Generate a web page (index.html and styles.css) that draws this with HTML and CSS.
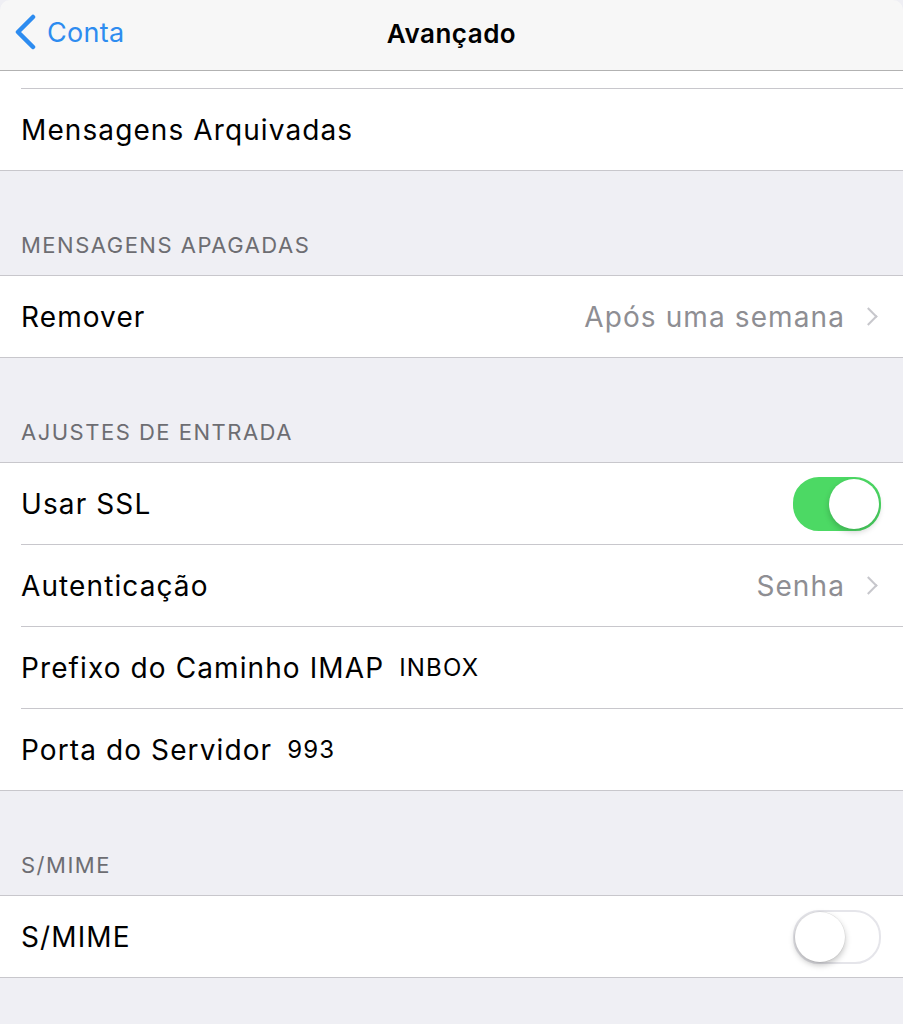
FILE: index.html
```html
<!DOCTYPE html>
<html lang="pt">
<head>
    <meta charset="UTF-8">
    <title>Avançado</title>
    <link rel="stylesheet" href="styles.css">
</head>
<body>
    <header class="navbar">
        <a class="back">
            <svg class="back-icon" width="22" height="36" viewBox="0 0 22 36"><path d="M19 3 L4 18 L19 33" fill="none" stroke="#2d8cf0" stroke-width="4.5" stroke-linecap="round" stroke-linejoin="round"/></svg>
            <span>Conta</span>
        </a>
        <div class="title">Avançado</div>
    </header>

    <div class="group">
        <div class="cut-row"></div>
        <div class="row"><span class="label">Mensagens Arquivadas</span></div>
    </div>

    <div class="section-title">MENSAGENS APAGADAS</div>
    <div class="group">
        <div class="row">
            <span class="label">Remover</span>
            <span class="value">Após uma semana</span>
            <span class="chevron"></span>
        </div>
    </div>

    <div class="section-title">AJUSTES DE ENTRADA</div>
    <div class="group">
        <div class="row">
            <span class="label">Usar SSL</span>
            <span class="switch on"><span class="knob"></span></span>
        </div>
        <div class="row">
            <span class="label">Autenticação</span>
            <span class="value">Senha</span>
            <span class="chevron"></span>
        </div>
        <div class="row">
            <span class="label">Prefixo do Caminho IMAP</span>
            <span class="inline-value">INBOX</span>
        </div>
        <div class="row">
            <span class="label">Porta do Servidor</span>
            <span class="inline-value">993</span>
        </div>
    </div>

    <div class="section-title">S/MIME</div>
    <div class="group">
        <div class="row">
            <span class="label">S/MIME</span>
            <span class="switch"><span class="knob"></span></span>
        </div>
    </div>
</body>
</html>
```

FILE: styles.css
```css
body {
    margin: 0;
    background-color: #efeff4;
    font-family: Inter, "Noto Sans", sans-serif;
    color: #000;
    height: 1024px;
    overflow: hidden;
}
.navbar {
    position: relative;
    height: 70px;
    background-color: #f7f7f7;
    border-bottom: 1px solid #b2b2b2;
    border-radius: 10px 10px 0 0;
    display: flex;
    align-items: center;
    justify-content: center;
}
.back {
    position: absolute;
    left: 14px;
    top: 14px;
    display: flex;
    align-items: center;
    color: #2d8cf0;
    font-size: 27px;
    letter-spacing: 0.3px;
}
.back-icon {
    margin-right: 11px;
}
.title {
    font-size: 26px;
    font-weight: 600;
    letter-spacing: 0.5px;
    margin-top: -3px;
}
.group {
    background-color: #fff;
    border-bottom: 1px solid #c8c7cc;
    border-top: 1px solid #c8c7cc;
    padding-left: 21px;
}
.navbar + .group {
    border-top: none;
}
.cut-row {
    height: 17px;
    border-bottom: 1px solid #c8c7cc;
}
.row {
    height: 81px;
    display: flex;
    align-items: center;
    padding-right: 22px;
    border-bottom: 1px solid #c8c7cc;
    font-size: 28px;
    letter-spacing: 1.1px;
}
.row:last-child {
    border-bottom: none;
}
.label {
    flex: none;
}
.value {
    margin-left: auto;
    color: #8e8e93;
}
.inline-value {
    margin-left: 15px;
    font-size: 24px;
    letter-spacing: 1.2px;
}
.chevron {
    width: 11px;
    height: 11px;
    border-top: 2.5px solid #c7c7cc;
    border-right: 2.5px solid #c7c7cc;
    transform: rotate(45deg);
    margin-left: 17px;
    margin-right: 6px;
}
.section-title {
    height: 104px;
    box-sizing: border-box;
    padding: 61px 0 0 21px;
    color: #6d6d72;
    font-size: 22px;
    letter-spacing: 1.5px;
}
.switch {
    margin-left: auto;
    position: relative;
    width: 84px;
    height: 50px;
    border-radius: 26px;
    border: 2px solid #e5e5ea;
    background-color: #fff;
    margin-right: 0;
}
.switch.on {
    background-color: #4cd964;
    border-color: #4cd964;
}
.knob {
    position: absolute;
    top: 0;
    left: 0;
    width: 50px;
    height: 50px;
    border-radius: 50%;
    background-color: #fff;
    box-shadow: 0 3px 6px rgba(0, 0, 0, 0.25), 0 0 0 0.5px rgba(0, 0, 0, 0.08);
}
.switch.on .knob {
    left: 34px;
    box-shadow: 0 3px 6px rgba(0, 0, 0, 0.2);
}
```
